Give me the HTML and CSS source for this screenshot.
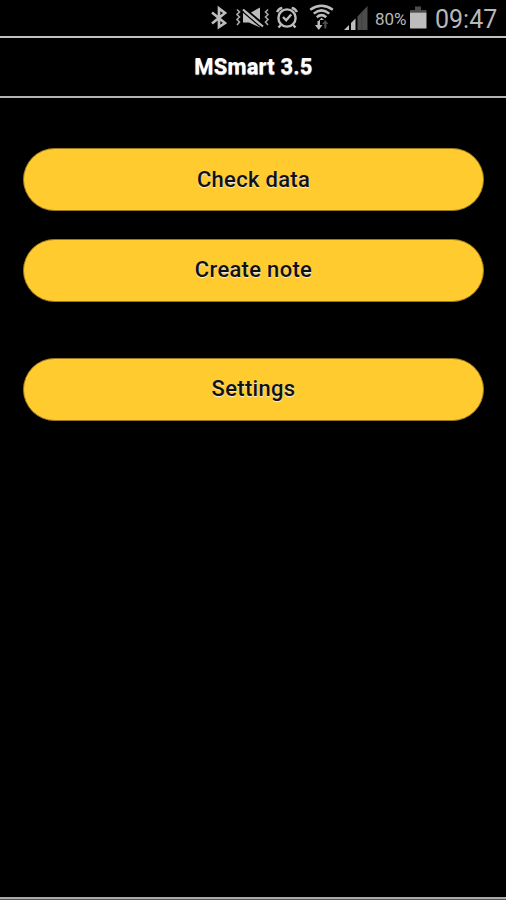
FILE: index.html
```
<!DOCTYPE html>
<html lang="en">
<head>
  <meta charset="UTF-8">
  <meta name="viewport" content="width=device-width, initial-scale=1.0">
  <title>MSmart 3.5</title>
  <link rel="stylesheet" href="styles.css">
</head>
<body>
  <div class="status-bar">
    <svg class="icon-bluetooth" width="16" height="36" viewBox="0 0 16 36" fill="none" stroke="#bdbdbd" stroke-width="2.7">
      <path d="M1 12.5 L14 23 L8 27 V8.5 L14 13 L1 23.5"></path>
    </svg>

    <svg class="icon-mute" width="34" height="36" viewBox="0 0 34 36" fill="none" stroke="#a8a8a8" stroke-width="1.6">
      <path d="M1 9.5 l2.5 2.5 -2.5 2.5 2.5 2.5 -2.5 2.5 2.5 2.5 -2.5 3"></path>
      <path d="M32 9.5 l-2.5 2.5 2.5 2.5 -2.5 2.5 2.5 2.5 -2.5 2.5 2.5 3"></path>
      <path d="M7 12.5 V22.5 H13 L24 27.5 V24 L9 12z M15 12.5 L24 7.5 V20z" fill="#bdbdbd" stroke="none"></path>
      <path d="M7 12 L24 26.5" stroke="#000" stroke-width="1.2"></path>
      <path d="M7 9.5 L27 26.5" stroke="#bdbdbd" stroke-width="2.2"></path>
    </svg>

    <svg class="icon-alarm" width="22" height="36" viewBox="0 0 22 36" fill="none" stroke="#bdbdbd" stroke-width="2.4">
      <circle cx="11" cy="18" r="8.6"></circle>
      <path d="M1.2 12.2 Q2.2 8.7 6.3 8 M15.7 8 Q19.8 8.7 20.8 12.2"></path>
      <path d="M4.8 25 L2.5 27.5 M17.2 25 L19.5 27.5"></path>
      <path d="M7 17 L10.2 20.3 L15.2 14.5"></path>
    </svg>

    <svg class="icon-wifi" width="26" height="36" viewBox="0 0 26 36" fill="none" stroke="#bdbdbd" stroke-width="2.5">
      <path d="M1.2 9.7 Q12.5 1.8 23.8 9.7"></path>
      <path d="M4.7 13.6 Q12.5 7.2 20.3 13.6"></path>
      <path d="M7.8 17.2 Q12.5 13 17.2 17.2"></path>
      <path d="M9.5 21 L12.5 17.8 L15 20 H11 V26 H8.5 V21z" fill="#bdbdbd" stroke="none"></path>
      <path d="M6 25 H13.5 L9.8 30z" fill="#bdbdbd" stroke="none"></path>
      <path d="M13.2 24 L16.3 20 L19.3 24z M15.2 23 h2.2 v5.5 h-2.2z" fill="#4c4c4c" stroke="none"></path>
    </svg>

    <svg class="icon-signal" width="24" height="36" viewBox="0 0 24 36">
      <path d="M0 30 L5 25 V30z" fill="#bdbdbd"></path>
      <path d="M7 30 V23 L11.5 18.5 V30z" fill="#bdbdbd"></path>
      <path d="M13.5 30 V16.5 L23.5 6 V30z" fill="#4c4c4c"></path>
      <path d="M17.8 12 V30" stroke="#404040" stroke-width="1"></path>
    </svg>

    <span class="battery-level">80%</span>

    <svg class="icon-battery" width="17" height="36" viewBox="0 0 17 36">
      <path d="M0 10 H5 V6.5 H11 V10 H16.5 V12.5 H0z" fill="#4c4c4c"></path>
      <path d="M0 12.5 H16.5 V28.5 H0z" fill="#bdbdbd"></path>
    </svg>

    <span class="clock">09:47</span>
  </div>

  <header class="header">
    <h1>MSmart 3.5</h1>
  </header>

  <main class="menu">
    <button class="btn">Check data</button>
    <button class="btn btn-note">Create note</button>
    <button class="btn btn-settings">Settings</button>
  </main>

  <footer class="footer"></footer>
</body>
</html>
```

FILE: styles.css
```
* {
  box-sizing: border-box;
}
body {
  font-family: Roboto, "Liberation Sans", sans-serif;
  display: flex;
  flex-direction: column;
  height: 100vh;
  margin: 0;
  overflow: hidden;
  background-color: #000;
  color: #fff;
}
.status-bar {
  display: flex;
  align-items: flex-start;
  justify-content: flex-end;
  height: 36px;
  padding-right: 10px;
  color: #b8b8b8;
}
.status-bar svg {
  flex: none;
}
.icon-bluetooth {
  margin-right: 9px;
}
.icon-mute {
  margin-right: 6px;
}
.icon-alarm {
  margin-right: 11px;
}
.icon-wifi {
  margin-right: 9px;
}
.icon-signal {
  margin-right: 7px;
}
.battery-level {
  width: 35px;
  font-size: 17px;
  line-height: 38px;
}
.clock {
  width: 61px;
  margin-left: 8px;
  font-size: 25px;
  line-height: 40px;
  white-space: nowrap;
}
.header {
  display: flex;
  align-items: center;
  justify-content: center;
  height: 62px;
  padding-bottom: 1px;
  border-top: 2px solid #c2c2c2;
  border-bottom: 2px solid #b4b4b4;
}
.header h1 {
  margin: 0;
  padding-left: 1px;
  font-size: 22px;
  font-weight: 700;
  letter-spacing: 0.15px;
  text-shadow: 0 1px 1px #ddd;
}
.menu {
  display: flex;
  flex: 1;
  flex-direction: column;
  gap: 28px;
  padding: 50px 22px 0 23px;
}
.btn {
  height: 63px;
  padding: 0 0 1px;
  border: 1px solid #9b7a1c;
  border-radius: 32px;
  background-color: #ffcb2f;
  color: #111;
  font-family: inherit;
  font-size: 22px;
  font-weight: 500;
  letter-spacing: 0.3px;
  text-shadow: 0 1px 1px #eee;
}
.btn-note {
  padding-bottom: 3px;
}
.btn-settings {
  margin-top: 28px;
  padding-bottom: 3px;
}
.footer {
  height: 3px;
  border-top: 2px solid #aaa;
  border-bottom: 1px solid #555;
}
```
